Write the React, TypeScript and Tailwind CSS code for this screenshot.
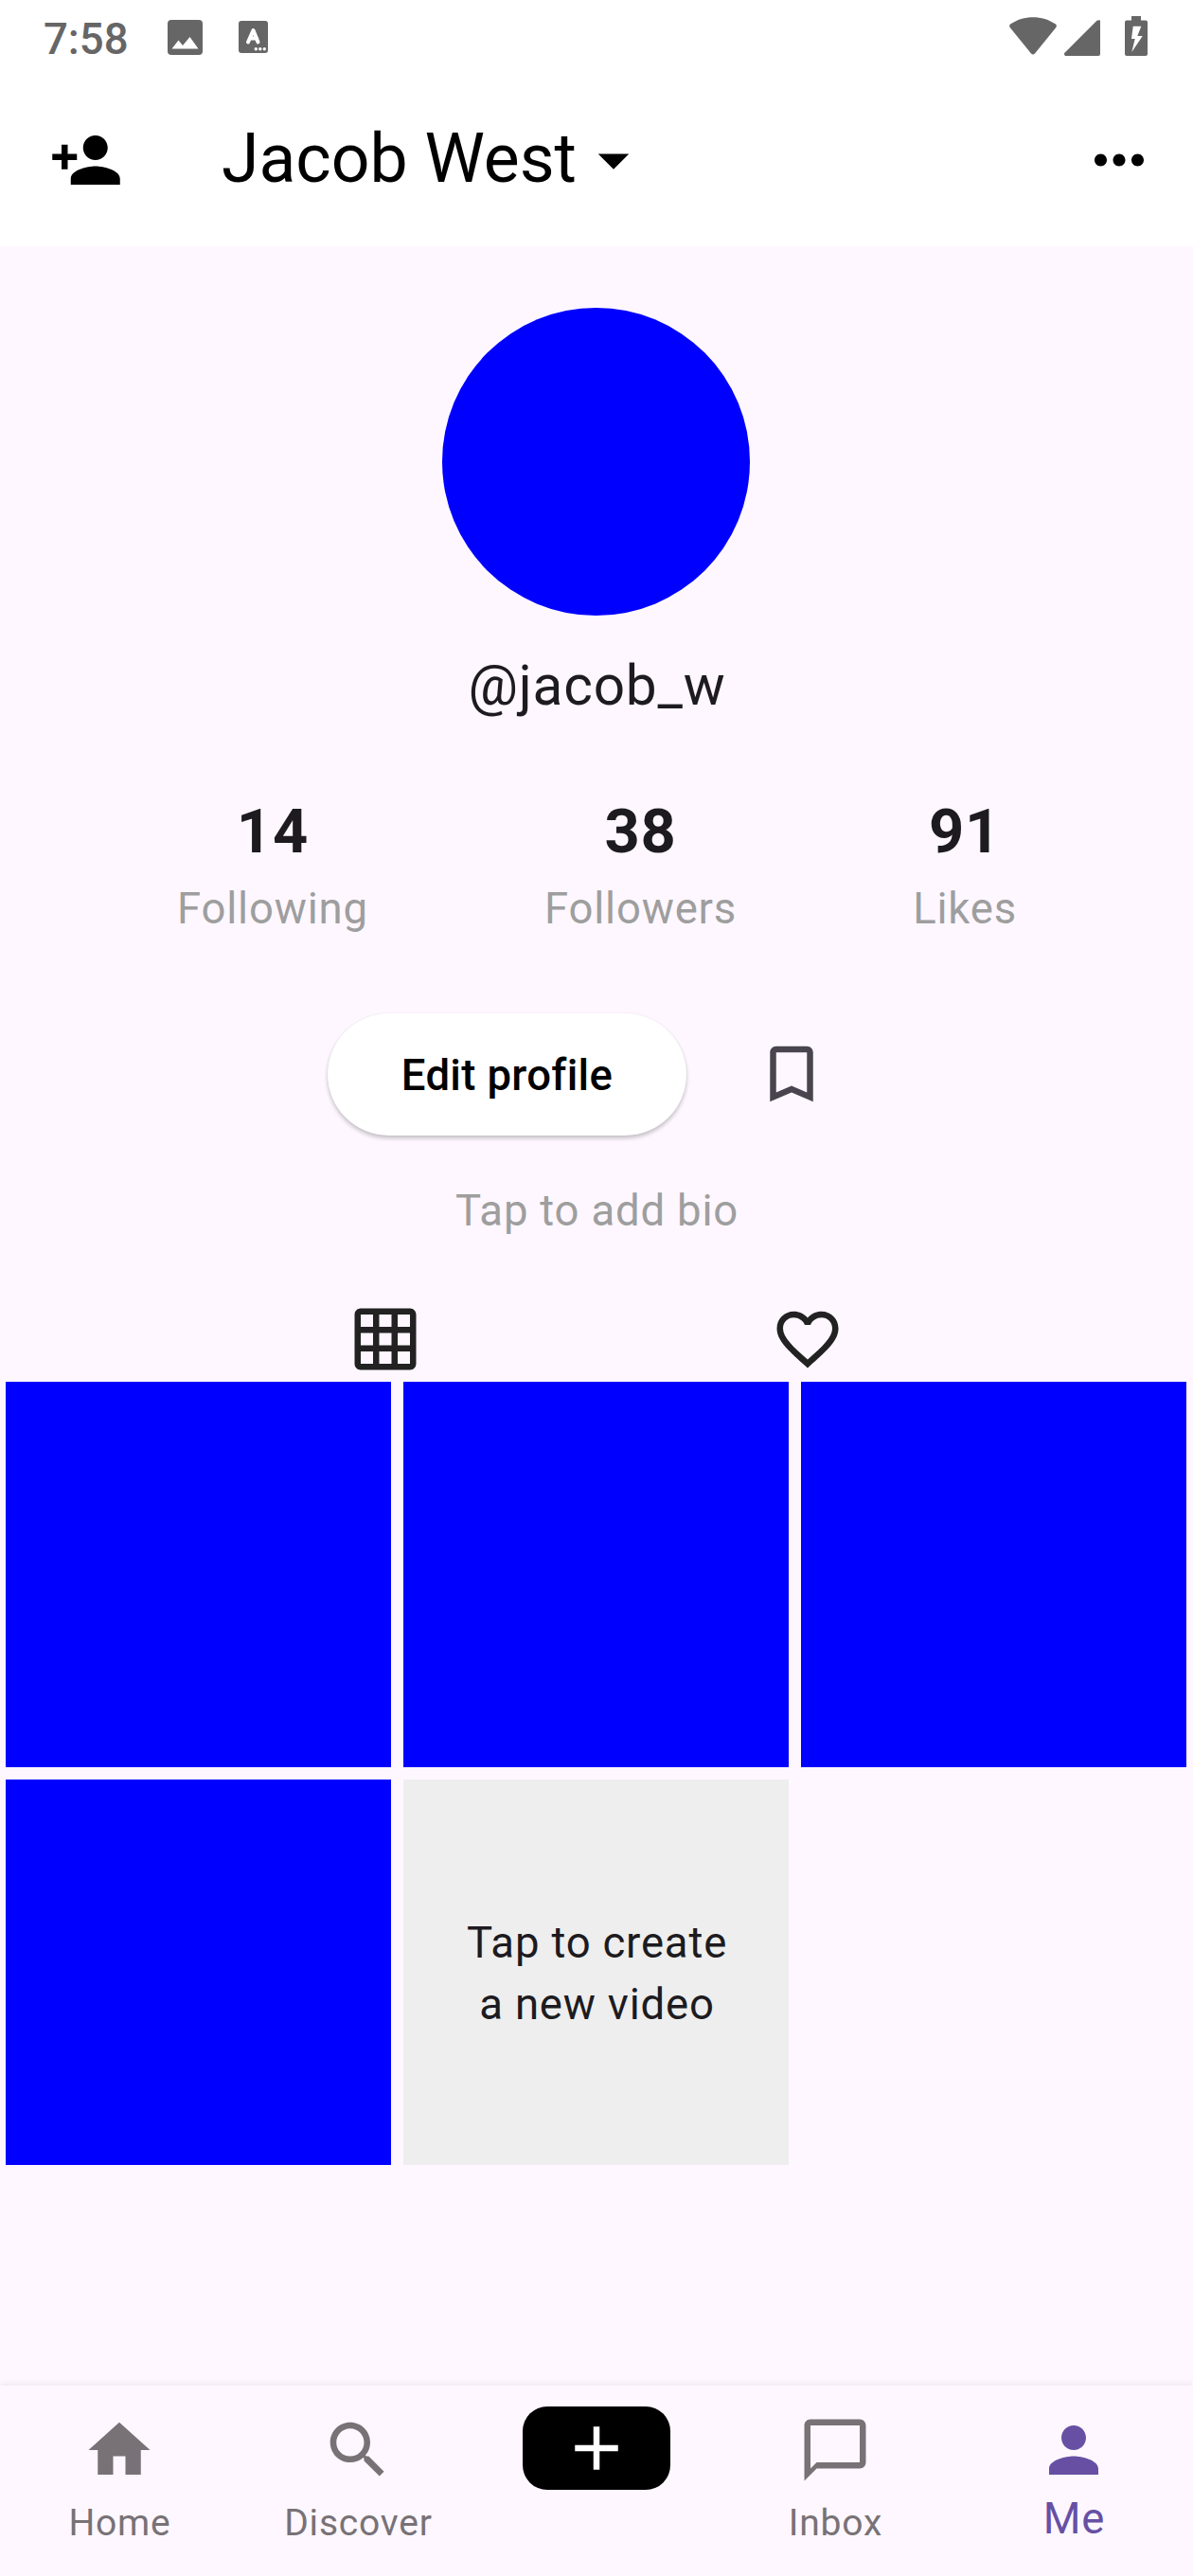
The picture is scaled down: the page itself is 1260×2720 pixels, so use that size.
import type { ReactNode } from "react";

function Icon({ d, className = "" }: { d: string; className?: string }) {
  return (
    <svg viewBox="0 0 24 24" fill="currentColor" className={`size-[78px] shrink-0 ${className}`}>
      <path d={d} />
    </svg>
  );
}

const icons = {
  personAdd:
    "M15 12c2.21 0 4-1.79 4-4s-1.79-4-4-4-4 1.79-4 4 1.79 4 4 4zm-9-2V7H4v3H1v2h3v3h2v-3h3v-2H6zm9 4c-2.67 0-8 1.34-8 4v2h16v-2c0-2.66-5.33-4-8-4z",
  arrowDropDown: "M7 10l5 5 5-5z",
  moreHoriz:
    "M6 10c-1.1 0-2 .9-2 2s.9 2 2 2 2-.9 2-2-.9-2-2-2zm12 0c-1.1 0-2 .9-2 2s.9 2 2 2 2-.9 2-2-.9-2-2-2zm-6 0c-1.1 0-2 .9-2 2s.9 2 2 2 2-.9 2-2-.9-2-2-2z",
  bookmark:
    "M17 3H7c-1.1 0-1.99.9-1.99 2L5 21l7-3 7 3V5c0-1.1-.9-2-2-2zm0 15l-5-2.18L7 18V5h10v13z",
  grid:
    "M20 2H4c-1.1 0-2 .9-2 2v16c0 1.1.9 2 2 2h16c1.1 0 2-.9 2-2V4c0-1.1-.9-2-2-2zM8 20H4v-4h4v4zm0-6H4v-4h4v4zm0-6H4V4h4v4zm6 12h-4v-4h4v4zm0-6h-4v-4h4v4zm0-6h-4V4h4v4zm6 12h-4v-4h4v4zm0-6h-4v-4h4v4zm0-6h-4V4h4v4z",
  heart:
    "M16.5 3c-1.74 0-3.41.81-4.5 2.09C10.91 3.81 9.24 3 7.5 3 4.42 3 2 5.42 2 8.5c0 3.78 3.4 6.86 8.55 11.54L12 21.35l1.45-1.32C18.6 15.36 22 12.28 22 8.5 22 5.42 19.58 3 16.5 3zm-4.4 15.55l-.1.1-.1-.1C7.14 14.24 4 11.39 4 8.5 4 6.5 5.5 5 7.5 5c1.54 0 3.04.99 3.57 2.36h1.87C13.46 5.99 14.96 5 16.5 5c2 0 3.5 1.5 3.5 3.5 0 2.89-3.14 5.74-7.9 10.05z",
  home: "M10 20v-6h4v6h5v-8h3L12 3 2 12h3v8z",
  search:
    "M15.5 14h-.79l-.28-.27C15.41 12.59 16 11.11 16 9.5 16 5.91 13.09 3 9.5 3S3 5.91 3 9.5 5.91 16 9.5 16c1.61 0 3.09-.59 4.23-1.57l.27.28v.79l5 4.99L20.49 19l-4.99-5zm-6 0C7.01 14 5 11.99 5 9.5S7.01 5 9.5 5 14 7.01 14 9.5 11.99 14 9.5 14z",
  add: "M19 13h-6v6h-2v-6H5v-2h6V5h2v6h6v2z",
  chat: "M20 2H4c-1.1 0-2 .9-2 2v18l4-4h14c1.1 0 2-.9 2-2V4c0-1.1-.9-2-2-2zm0 14H6l-2 2V4h16v12z",
  person:
    "M12 12c2.21 0 4-1.79 4-4s-1.79-4-4-4-4 1.79-4 4 1.79 4 4 4zm0 2c-2.67 0-8 1.34-8 4v2h16v-2c0-2.66-5.33-4-8-4z",
};

function StatusBar() {
  return (
    <div className="flex h-[78px] items-start pl-[46px] pr-[48px] text-[#666666]">
      <span className="mt-[15px] w-[90px] text-[45.5px] leading-[54px] font-medium">7:58</span>
      <svg viewBox="0 0 37 37" className="ml-[41px] mt-[21px] size-[37px]">
        <rect width="37" height="37" rx="4" fill="currentColor" />
        <path d="M4.5 30.5L11.5 21.5 16 27 23.500 18 32.500 30.5z" fill="#fff" />
      </svg>
      <svg viewBox="0 0 31 34" className="ml-[38px] mt-[22px] h-[34px] w-[31px]">
        <rect width="31" height="34" rx="3" fill="currentColor" />
        <path
          d="M10 22.500L15.500 10L20.500 22.500M11.800 18.500h7.400"
          stroke="#fff"
          strokeWidth="4"
          strokeLinecap="round"
          strokeLinejoin="round"
          fill="none"
        />
        <circle cx="18.300" cy="29.800" r="1.700" fill="#fff" />
        <circle cx="22.800" cy="29.800" r="1.700" fill="#fff" />
        <circle cx="27.300" cy="29.800" r="1.700" fill="#fff" />
      </svg>
      <svg viewBox="0 0 50 40" fill="currentColor" className="ml-auto mt-[18px] h-[40px] w-[50px]">
        <path d="M1 7.500C15-2.300 35-2.300 49 7.500Q50.500 9 49.300 11L27 38.500Q25 40.500 23 38.500L.7 11Q-.5 9 1 7.500z" />
      </svg>
      <svg viewBox="0 0 38 38" fill="currentColor" className="ml-[8px] mt-[21px] size-[38px]">
        <path d="M34.500.8Q36 0 38 .5V36Q38 38 36 38H1Q0 38 0 35.300z" />
      </svg>
      <svg viewBox="0 0 24 42" className="ml-[26px] mt-[17px] h-[42px] w-[24px]">
        <path
          fill="currentColor"
          d="M7 0H17V4.500H22Q24 4.500 24 6.500V40Q24 42 22 42H2Q0 42 0 40V6.500Q0 4.500 2 4.500H7z"
        />
        <path fill="#fff" d="M8.700 10.700H17.300L13.300 21H18.700L7.300 38L10.700 24H7z" />
      </svg>
    </div>
  );
}

function Header() {
  return (
    <header className="h-[260px] bg-white text-black">
      <StatusBar />
      <div className="flex h-[182px] items-center pr-[39px] pl-[52px]">
        <Icon d={icons.personAdd} />
        <h1 className="mb-[3px] ml-[104px] text-[71.5px] leading-[84px] whitespace-nowrap">Jacob West</h1>
        <Icon d={icons.arrowDropDown} />
        <Icon d={icons.moreHoriz} className="ml-auto" />
      </div>
    </header>
  );
}

function Stat({ value, label }: { value: string; label: string }) {
  return (
    <div className="flex flex-col items-center gap-[3px]">
      <span className="text-[65px] leading-[92px] font-bold">{value}</span>
      <span className="text-[45.5px] leading-[65px] text-[#9e9e9e]">{label}</span>
    </div>
  );
}

function NavItem({ icon, label, active = false }: { icon: string; label: string; active?: boolean }) {
  return (
    <div
      className={`flex flex-1 flex-col items-center pt-[29px] ${active ? "text-[#6750a4]" : "text-[#787276]"}`}
    >
      <Icon d={icon} />
      {active ? (
        <span className="mt-[1px] pl-[1px] text-[45.5px] leading-[65px]">{label}</span>
      ) : (
        <span className="mt-[12px] pl-[1px] text-[39px] leading-[52px]">{label}</span>
      )}
    </div>
  );
}

function Tile({ children }: { children?: ReactNode }) {
  return <div className="h-[407px] bg-[#0000ff]">{children}</div>;
}

export default function App() {
  return (
    <div className="flex h-[2720px] w-[1260px] flex-col overflow-hidden bg-[#fef7ff] font-['Roboto',sans-serif] text-[#1d1b20]">
      <Header />

      <main className="flex flex-1 flex-col tracking-[0.8125px]">
        <section className="flex flex-col items-center pt-[65px]">
          <div className="mr-[1px] size-[325px] rounded-full bg-[#0000ff]" />
          <p className="mt-[32px] pl-[1px] text-[58.5px] leading-[84px]">@jacob_w</p>
          <div className="mt-[66px] flex w-full justify-evenly pl-[1px]">
            <Stat value="14" label="Following" />
            <Stat value="38" label="Followers" />
            <Stat value="91" label="Likes" />
          </div>
          <div className="mt-[64px] flex h-[156px] items-center gap-[33px]">
            <button className="mt-[1px] flex h-[129px] w-[379px] items-center justify-center rounded-full bg-white pt-[1px] text-[45.5px] leading-[65px] font-medium tracking-[0.325px] text-black shadow-[0_3px_4px_rgba(0,0,0,0.22),0_0_2px_rgba(0,0,0,0.07)]">
              Edit profile
            </button>
            <div className="flex size-[156px] items-center justify-center text-[#49454f]">
              <Icon d={icons.bookmark} />
            </div>
          </div>
          <p className="mt-[34px] pl-[1px] text-[45.5px] leading-[65px] text-[#9e9e9e]">Tap to add bio</p>
        </section>

        <div className="mt-[64px] flex h-[78px] justify-evenly text-[#222222]">
          <Icon d={icons.grid} />
          <Icon d={icons.heart} />
        </div>

        <div className="mt-[6px] grid grid-cols-[407px_407px_407px] gap-[13px] pl-[6px]">
          <Tile />
          <Tile />
          <Tile />
          <Tile />
          <div className="flex h-[407px] items-center justify-center bg-[#eeeeee] pt-[2px] pl-[2px] text-center text-[45.5px] leading-[65px]">
            <p>
              Tap to create
              <br />a new video
            </p>
          </div>
        </div>
      </main>

      <nav className="flex h-[201px] bg-[#fef7ff] tracking-[0.8125px] shadow-[0_-4px_5px_rgba(0,0,0,0.045)]">
        <NavItem icon={icons.home} label="Home" />
        <NavItem icon={icons.search} label="Discover" />
        <div className="flex flex-1 justify-center pt-[22px]">
          <div className="flex h-[88px] w-[156px] items-center justify-center rounded-[26px] bg-black text-white">
            <Icon d={icons.add} />
          </div>
        </div>
        <NavItem icon={icons.chat} label="Inbox" />
        <NavItem icon={icons.person} label="Me" active />
      </nav>
    </div>
  );
}
